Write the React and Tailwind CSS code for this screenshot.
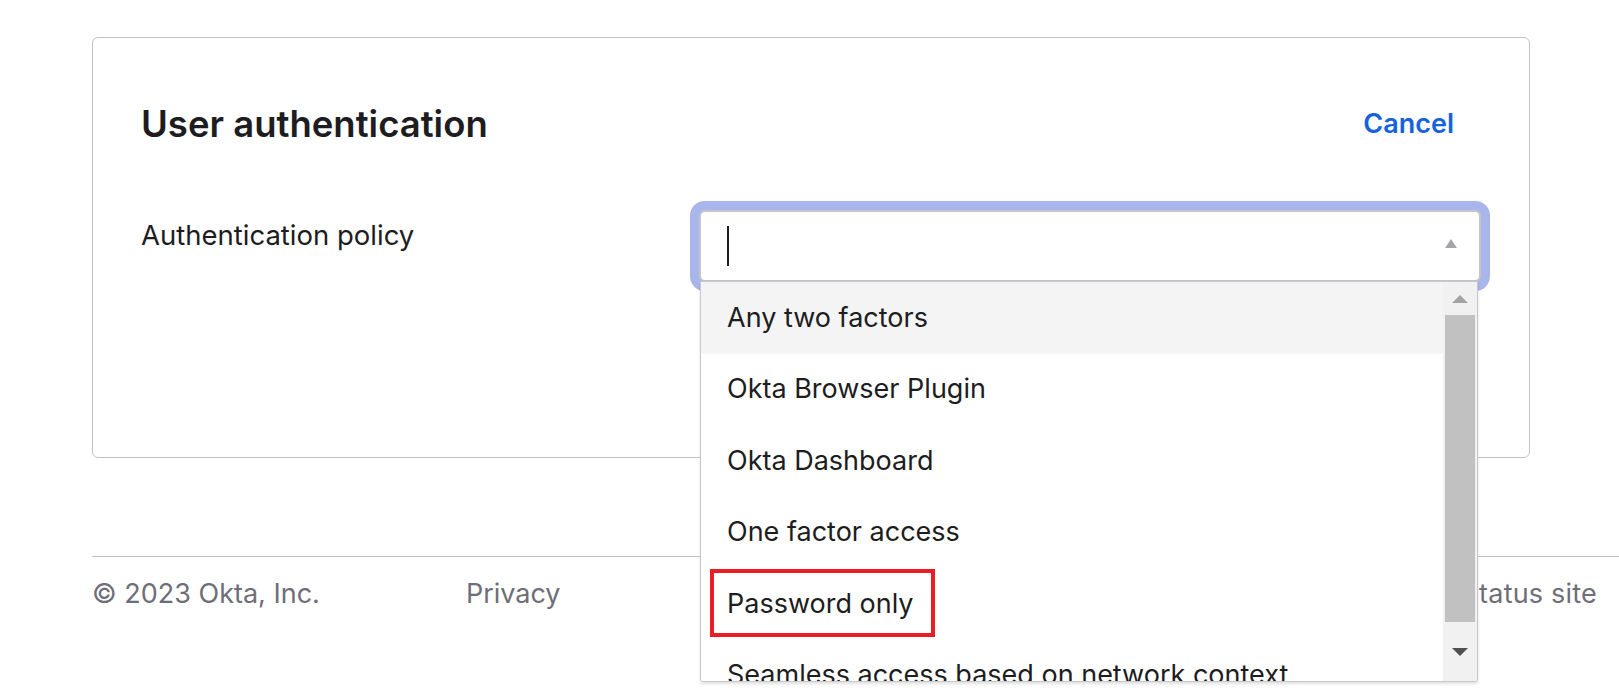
import React from 'react';

// Options shown in the open policy dropdown
const POLICIES = [
    'Any two factors',
    'Okta Browser Plugin',
    'Okta Dashboard',
    'One factor access',
    'Password only',
    'Seamless access based on network context',
];

function PolicySelect() {
    return (
        <div className="relative w-[782px] h-[72px]">
            {/* Focused input with ring */}
            <div className="h-full rounded-[6px] border-2 border-[#c4c4c9] bg-white shadow-[0_0_0_9px_#a9b6ec] flex items-center pl-[26px] pr-[22px]">
                <span className="block w-[2px] h-[40px] bg-[#1d1d21]" />
                <div className="flex-1" />
                <svg width="12" height="9" viewBox="0 0 12 9" className="mt-[-6px]">
                    <path d="M6 0 L12 9 L0 9 Z" fill="#a5a5ab" />
                </svg>
            </div>

            {/* Open listbox */}
            <div className="absolute left-[1px] right-[3px] top-[71px] h-[401px] bg-white border border-[#c8c8cc] rounded-b-[3px] shadow-[0_2px_3px_rgba(0,0,0,0.12)] flex overflow-hidden">
                <ul className="flex-1 overflow-hidden">
                    {POLICIES.map((label, i) => (
                        <li
                            key={label}
                            className={`relative h-[71.5px] shrink-0 flex items-center pl-[26px] text-[27px] text-[#1d1d21] whitespace-nowrap ${i === 0 ? 'bg-[#f4f4f4]' : 'bg-white'}`}
                        >
                            {label}
                            {label === 'Password only' && (
                                <span className="absolute left-[9px] top-[1px] w-[225px] h-[68px] border-[4px] border-[#ec1c24] pointer-events-none" />
                            )}
                        </li>
                    ))}
                </ul>

                {/* Scrollbar */}
                <div className="w-[34px] bg-[#f1f1f1] flex flex-col items-center">
                    <div className="h-[33px] w-full flex items-center justify-center">
                        <svg width="16" height="8" viewBox="0 0 16 8">
                            <path d="M8 0 L16 8 L0 8 Z" fill="#a3a3a3" />
                        </svg>
                    </div>
                    <div className="w-[30px] h-[307px] bg-[#c1c1c1]" />
                    <div className="flex-1 w-full flex items-center justify-center">
                        <svg width="16" height="8" viewBox="0 0 16 8">
                            <path d="M0 0 L16 0 L8 8 Z" fill="#505050" />
                        </svg>
                    </div>
                </div>
            </div>
        </div>
    );
}

export default function App() {
    return (
        <div className="h-[690px] overflow-hidden bg-white font-['Inter',sans-serif]">
            <div className="pl-[92px] pt-[37px]">
                {/* Card */}
                <section className="w-[1438px] h-[421px] border border-[#c2c2c8] rounded-[6px] px-[48px] pt-[66px]">
                    <div className="flex items-center justify-between h-[40px]">
                        <h1 className="text-[36.5px] leading-[40px] font-semibold text-[#1d1d21]">User authentication</h1>
                        <button className="mr-[27px] text-[27px] font-semibold text-[#1662dd]">Cancel</button>
                    </div>

                    <div className="flex mt-[66px] relative z-10">
                        <label className="w-[558px] mt-[9px] text-[27.5px] leading-[32px] text-[#1d1d21]">Authentication policy</label>
                        <PolicySelect />
                    </div>
                </section>

                {/* Footer */}
                <footer className="mt-[98px] border-t border-[#c2c2c8] flex items-center h-[76px] text-[27px] text-[#6e6e78]">
                    <span>© 2023 Okta, Inc.</span>
                    <a className="ml-[146px]">Privacy</a>
                    <div className="flex-1" />
                    <a className="mr-[22px] tracking-[0.2px]">Status site</a>
                </footer>
            </div>
        </div>
    );
}
